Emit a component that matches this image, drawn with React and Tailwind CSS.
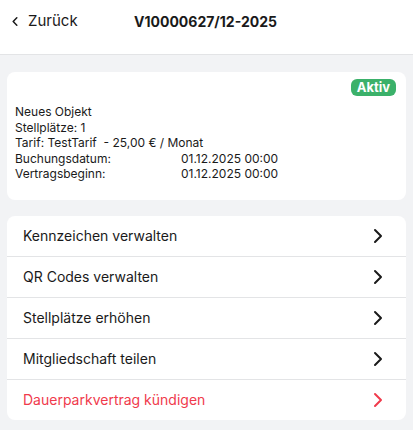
import React from "react";

const Chevron = ({ color = "#1a1a1a" }) => (
  <svg width="10" height="16" viewBox="0 0 10 16" fill="none">
    <path d="M2 2l6 6-6 6" stroke={color} strokeWidth="2" strokeLinecap="round" strokeLinejoin="round" />
  </svg>
);

const rows = [
  "Kennzeichen verwalten",
  "QR Codes verwalten",
  "Stellplätze erhöhen",
  "Mitgliedschaft teilen",
];

export default function App() {
  return (
    <div className="w-[413px] h-[430px] bg-[#f2f3f5] text-[#1a1a1a]" style={{ fontFamily: "Inter, 'Noto Sans', sans-serif" }}>
      <div className="relative h-[55px] bg-white border-b border-[#e3e4e6]">
        <div className="flex items-center pl-[12px] gap-[10px] h-[42px]">
          <svg width="6" height="9" viewBox="0 0 6 9" fill="none">
            <path d="M4.8 0.8L1.2 4.5l3.6 3.7" stroke="#1a1a1a" strokeWidth="1.5" strokeLinecap="round" strokeLinejoin="round" />
          </svg>
          <span className="text-[15px]">Zurück</span>
        </div>
        <div className="absolute left-0 right-0 top-0 h-[42px] flex items-center justify-center pointer-events-none">
          <span className="text-[14px] font-bold pr-[2px]">V10000627/12-2025</span>
        </div>
      </div>

      <div className="px-[7px] pt-[17px]">
        <div className="bg-white rounded-[8px] pt-[7px] pb-[18px] px-[8px]">
          <div className="flex justify-end pr-[2px]">
            <span className="h-[17px] w-[45px] justify-center rounded-[6px] bg-[#3bb16a] text-white text-[13px] font-bold flex items-center">Aktiv</span>
          </div>
          <div className="mt-[8px] text-[12px] leading-[15.5px]">
            <div>Neues Objekt</div>
            <div>Stellplätze: 1</div>
            <div>Tarif: TestTarif&nbsp; - 25,00 € / Monat</div>
            <div className="flex"><span className="w-[166px]">Buchungsdatum:</span><span>01.12.2025 00:00</span></div>
            <div className="flex"><span className="w-[166px]">Vertragsbeginn:</span><span>01.12.2025 00:00</span></div>
          </div>
        </div>

        <div className="mt-[16px] bg-white rounded-[8px] overflow-hidden">
          {rows.map((r) => (
            <div key={r} className="h-[41px] border-b border-[#e3e4e6] flex items-center justify-between pl-[16px] pr-[23px] text-[14px]">
              <span>{r}</span>
              <Chevron />
            </div>
          ))}
          <div className="h-[40px] flex items-center justify-between pl-[16px] pr-[23px] text-[14px] text-[#f03a4c]">
            <span>Dauerparkvertrag kündigen</span>
            <Chevron color="#f03a4c" />
          </div>
        </div>
      </div>
    </div>
  );
}
